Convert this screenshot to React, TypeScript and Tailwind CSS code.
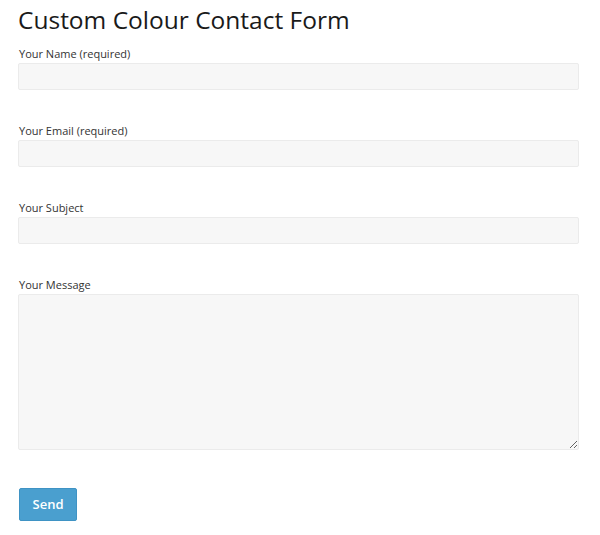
export default function App() {
  const fields = ["Your Name (required)", "Your Email (required)", "Your Subject"];
  return (
    <div className="w-[600px] h-[535px] bg-white pl-[18px] pr-[21px] pt-[4px] font-['Open_Sans',sans-serif] text-[#222]">
      <h1 className="text-[24.5px] leading-[32px] font-normal text-[#1a1a1a]">Custom Colour Contact Form</h1>
      <form className="flex flex-col mt-[10px]">
        {fields.map((f) => (
          <div key={f} className="flex flex-col mb-[33px]">
            <label className="text-[11px] leading-[16px] text-[#333] pl-px">{f}</label>
            <input className="mt-[1px] h-[27px] w-full bg-[#f7f7f7] border border-[#ebebeb] rounded-[2px] outline-none" />
          </div>
        ))}
        <div className="flex flex-col">
          <label className="text-[11px] leading-[16px] text-[#333] pl-px">Your Message</label>
          <textarea className="mt-[1px] h-[156px] w-full bg-[#f7f7f7] border border-[#ebebeb] rounded-[2px] outline-none resize-y" />
        </div>
        <div className="mt-[38px] pl-px">
          <button type="button" className="w-[58px] h-[33px] bg-[#4a9fcf] text-white text-[13px] font-semibold rounded-[2px] border border-[#3f93c4]">Send</button>
        </div>
      </form>
    </div>
  );
}
